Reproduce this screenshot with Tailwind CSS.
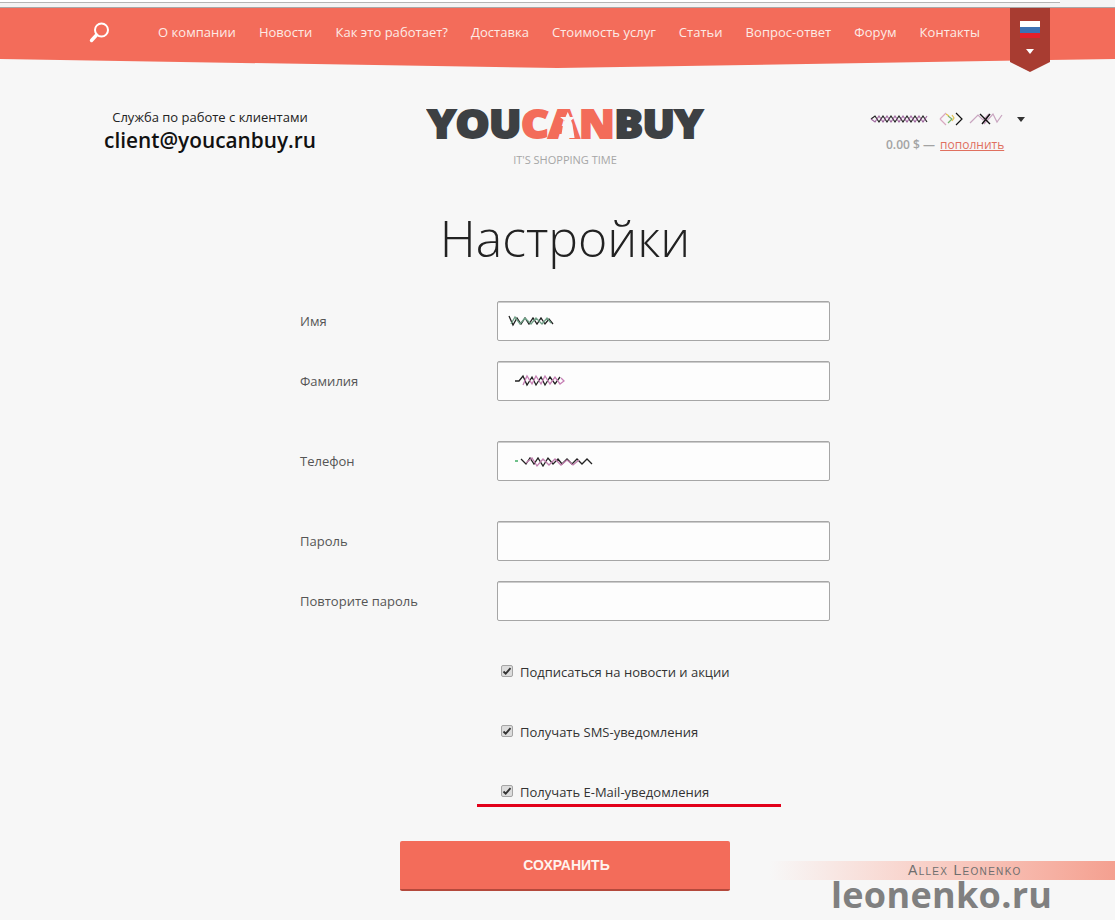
<!DOCTYPE html>
<html lang="ru">
<head>
<meta charset="utf-8">
<title>Настройки</title>
<script src="https://cdn.jsdelivr.net/npm/@tailwindcss/browser@4"></script>
</head>
<body class="bg-[#f7f7f7] font-['Open_Sans',sans-serif] overflow-hidden">
<div class="relative w-[1115px] h-[920px] overflow-hidden">

  <!-- browser edge -->
  <div class="h-[8px] bg-[#f4f4f4] border-b border-[#a8a8a8] relative">
    <div class="h-[3px] w-[1060px] bg-white border-b border-[#b5b5b5]"></div>
  </div>

  <!-- nav band -->
  <div class="relative h-[60px]">
    <div class="absolute inset-x-0 top-0 h-[60px] bg-[#f36c5a] [clip-path:polygon(0_0,100%_0,100%_51px,50%_100%,0_51px)]"></div>
    <nav class="relative flex items-center h-[48px] pl-[89px] text-[13px] text-[#fdebe6]">
      <svg class="w-[22px] h-[22px] mr-[47px]" viewBox="0 0 22 22" fill="none">
        <circle cx="12.5" cy="9" r="6.5" stroke="#fff" stroke-width="2"/>
        <path d="M7.5 14 L2.5 19.5" stroke="#fff" stroke-width="3.4" stroke-linecap="round"/>
      </svg>
      <div class="flex gap-[23px] tracking-[0.03px] pt-[2px]">
        <a>О компании</a><a>Новости</a><a>Как это работает?</a><a>Доставка</a><a>Стоимость услуг</a><a>Статьи</a><a>Вопрос-ответ</a><a>Форум</a><a>Контакты</a>
      </div>
    </nav>
    <div class="absolute left-[1010px] top-0 w-[40px] h-[64px] bg-[#a83c31] [clip-path:polygon(0_0,100%_0,100%_54px,50%_100%,0_54px)] flex flex-col items-center pt-[13px]">
      <div class="w-[20px] h-[6px] bg-white"></div>
      <div class="w-[20px] h-[6px] bg-[#3c72b4]"></div>
      <div class="w-[20px] h-[5px] bg-[#e3202a]"></div>
      <div class="mt-[11px] w-0 h-0 border-x-[4px] border-x-transparent border-t-[5px] border-t-white"></div>
    </div>
  </div>

  <!-- header -->
  <header class="flex h-[120px]">
    <div class="w-[420px] text-center pt-[40px]">
      <p class="text-[13px] leading-[18px] text-[#222]">Служба по работе с клиентами</p>
      <p class="text-[20.8px] leading-[28px] font-semibold text-[#111]">client@youcanbuy.ru</p>
    </div>
    <div class="w-[290px] flex flex-col items-center pt-[33px]">
      <div class="relative font-extrabold text-[39px] leading-[44px] tracking-[-0.5px] text-[#3d4043] scale-x-[1.1] whitespace-nowrap [-webkit-text-stroke:1.8px_currentColor]">YOU<span class="text-[#f36c5a]">CAN</span>BUY
        <svg class="absolute left-[120px] top-[11px] w-[15px] h-[26px]" viewBox="0 0 15 26"><path d="M7.500 0l2 5h5l-4 3.500 1.200 3.500 2 14h-12.400l2-14 1.200-3.500-4-3.500h5z" fill="#f7f7f7"/></svg>
      </div>
      <p class="mt-[8px] text-[11px] leading-[14px] text-[#a6a6a6]">IT'S SHOPPING TIME</p>
    </div>
    <div class="pl-[158px] pt-[42px] w-[405px]">
      <div class="flex items-center">
        <svg class="w-[144px] h-[18px]" viewBox="0 0 144 18" fill="none" stroke-width="1.2">
          <path d="M3 9l4-3 4 6 4-6 4 6 4-6 4 6 4-6 4 6 4-6 4 6 4-6 4 6 4-6 4 6" stroke="#222"/>
          <path d="M3 9l4 3 4-6 4 6 4-6 4 6 4-6 4 6 4-6 4 6 4-6 4 6 4-6 4 6 4-6" stroke="#a06aa0"/>
          <path d="M72 9l6-6M72 9l6 6" stroke="#d9a8c0"/>
          <path d="M80 6l4 3-4 4" stroke="#74b36a"/>
          <path d="M84 5l2 3-2 3M78 4l3 2" stroke="#e2c14a"/>
          <path d="M88 3l6 6-6 6" stroke="#111"/>
          <path d="M102 13l8-8 5 5 6-6-5 10 9-10 4 8 5-7" stroke="#c9a5c0"/>
          <path d="M112 4l10 10M122 4l-8 10" stroke="#111" stroke-width="1.4"/>
        </svg>
        <div class="ml-[5px] w-0 h-0 border-x-[4px] border-x-transparent border-t-[5px] border-t-[#333]"></div>
      </div>
      <p class="mt-[9px] ml-[18px] text-[12px] leading-[16px] text-[#a3a3a3] font-semibold">0.00 $ — <span class="ml-[2px] font-normal text-[#e0705f] underline">пополнить</span></p>
    </div>
  </header>

  <main>
    <h1 class="pl-[15px] text-center font-light text-[50px] leading-[72px] text-[#222] mt-[14px]">Настройки</h1>

    <form class="mt-[27px] pl-[300px] text-[13px] text-[#555]">
      <div class="flex items-center h-[40px]">
        <label class="w-[197px] pt-[2px]">Имя</label>
        <div class="w-[333px] h-[40px] bg-[#fdfdfd] border border-[#a6a6a6] rounded-[2px] shadow-[inset_0_1px_0_#ccc] flex items-center pl-[10px]">
          <svg class="w-[50px] h-[14px]" viewBox="0 0 50 14" fill="none" stroke-width="1.3"><path d="M1 2l4 9 4-7 4 6 4-6 4 6 4-6 4 6 4-6 4 6 4-5 4 5" stroke="#222"/><path d="M3 10l4-7 5 7 5-6 6 6 5-6 6 6 5-6 4 5" stroke="#6f9f86"/></svg>
        </div>
      </div>
      <div class="flex items-center h-[40px] mt-[20px]">
        <label class="w-[197px] pt-[2px]">Фамилия</label>
        <div class="w-[333px] h-[40px] bg-[#fdfdfd] border border-[#a6a6a6] rounded-[2px] shadow-[inset_0_1px_0_#ccc] flex items-center pl-[16px]">
          <svg class="w-[58px] h-[14px]" viewBox="0 0 58 14" fill="none" stroke-width="1.3"><path d="M1 7h4l4-5 4 9 5-8 4 8 5-8 4 8 5-8 5 7 5-7" stroke="#222"/><path d="M9 11l4-9 5 8 4-8 5 8 4-8 5 8 5-7 5 7 4-3-3-3" stroke="#c680b5"/></svg>
        </div>
      </div>
      <div class="flex items-center h-[40px] mt-[40px]">
        <label class="w-[197px] pt-[2px]">Телефон</label>
        <div class="w-[333px] h-[40px] bg-[#fdfdfd] border border-[#a6a6a6] rounded-[2px] shadow-[inset_0_1px_0_#ccc] flex items-center pl-[16px]">
          <svg class="w-[90px] h-[14px]" viewBox="0 0 90 14" fill="none" stroke-width="1.3"><path d="M1 7h3" stroke="#6fc08a" stroke-width="2"/><path d="M7 5l5 5 4-6 4 6 4-6 5 8 5-8 5 6 5-5 4 5 5-5 5 5 5-5 5 5 5-5 5 5" stroke="#222"/><path d="M12 9l6-5 5 8 6-7 6 6 6-6 6 6 6-5 6 5 6-5" stroke="#c07fae"/></svg>
        </div>
      </div>
      <div class="flex items-center h-[40px] mt-[40px]">
        <label class="w-[197px] pt-[2px]">Пароль</label>
        <div class="w-[333px] h-[40px] bg-[#fdfdfd] border border-[#a6a6a6] rounded-[2px] shadow-[inset_0_1px_0_#ccc]"></div>
      </div>
      <div class="flex items-center h-[40px] mt-[20px]">
        <label class="w-[197px] pt-[2px]">Повторите пароль</label>
        <div class="w-[333px] h-[40px] bg-[#fdfdfd] border border-[#a6a6a6] rounded-[2px] shadow-[inset_0_1px_0_#ccc]"></div>
      </div>

      <div class="pl-[201px] text-[#333]">
        <div class="flex items-center h-[20px] mt-[41px]">
          <span class="w-[12px] h-[12px] mt-[-3px] mr-[7px] rounded-[2px] bg-[#dcdcdc] border border-[#a5a5a5] flex items-center justify-center"><svg class="w-[10px] h-[10px]" viewBox="0 0 10 10" fill="none"><path d="M1.5 5.5l2.2 2.2 4.8-5.5" stroke="#333" stroke-width="1.8"/></svg></span>
          <label class="pt-[2px]">Подписаться на новости и акции</label>
        </div>
        <div class="flex items-center h-[20px] mt-[40px]">
          <span class="w-[12px] h-[12px] mt-[-3px] mr-[7px] rounded-[2px] bg-[#dcdcdc] border border-[#a5a5a5] flex items-center justify-center"><svg class="w-[10px] h-[10px]" viewBox="0 0 10 10" fill="none"><path d="M1.5 5.5l2.2 2.2 4.8-5.5" stroke="#333" stroke-width="1.8"/></svg></span>
          <label class="pt-[2px]">Получать SMS-уведомления</label>
        </div>
        <div class="flex items-center h-[20px] mt-[40px]">
          <span class="w-[12px] h-[12px] mt-[-3px] mr-[7px] rounded-[2px] bg-[#dcdcdc] border border-[#a5a5a5] flex items-center justify-center"><svg class="w-[10px] h-[10px]" viewBox="0 0 10 10" fill="none"><path d="M1.5 5.5l2.2 2.2 4.8-5.5" stroke="#333" stroke-width="1.8"/></svg></span>
          <label class="pt-[2px]">Получать E-Mail-уведомления</label>
        </div>
      </div>

      <button type="button" class="block ml-[100px] mt-[39px] w-[330px] h-[50px] pl-[3px] rounded-[2px] bg-[#f36c5a] border-b-2 border-[#b4493c] font-['Liberation_Sans',sans-serif] font-bold text-[14px] text-[#fff3ee]">СОХРАНИТЬ</button>
    </form>
  </main>

  <!-- red annotation -->
  <div class="absolute left-[477px] top-[804px] w-[304px] h-[3px] bg-[#e2001a]"></div>

  <!-- watermark -->
  <div class="absolute left-[770px] top-[861px] w-[345px] h-[19px] bg-gradient-to-r from-[#f7f7f7] to-[#f4a090] flex items-center pl-[138px] font-['Liberation_Sans',sans-serif] text-[14px] [font-variant:small-caps] tracking-[1.3px] text-[#6e6e6e] whitespace-nowrap">Allex Leonenko</div>
  <div class="absolute left-[831px] top-[880px] font-bold text-[36px] leading-[30px] tracking-[0.3px] text-[#808080] whitespace-nowrap">leonenko.ru</div>
</div>
</body>
</html>
